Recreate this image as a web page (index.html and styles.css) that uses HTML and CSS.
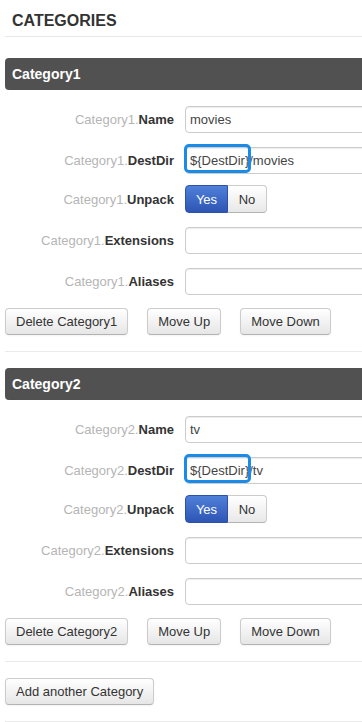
FILE: index.html
```html
<!DOCTYPE html>
<html>
<head>
<meta charset="utf-8">
<link rel="stylesheet" href="styles.css">
</head>
<body>
<div class="page">
  <h2 class="title">CATEGORIES</h2>

  <section class="cat">
    <div class="cat-bar">Category1</div>
    <div class="form">
      <div class="row">
        <label class="lbl"><span class="pre">Category1.</span><b>Name</b></label>
        <div class="input">movies</div>
      </div>
      <div class="row">
        <label class="lbl"><span class="pre">Category1.</span><b>DestDir</b></label>
        <div class="input">${DestDir}/movies<span class="hl"></span></div>
      </div>
      <div class="row row-toggle">
        <label class="lbl"><span class="pre">Category1.</span><b>Unpack</b></label>
        <div class="toggle"><span class="tg tg-on">Yes</span><span class="tg">No</span></div>
      </div>
      <div class="row">
        <label class="lbl"><span class="pre">Category1.</span><b>Extensions</b></label>
        <div class="input"></div>
      </div>
      <div class="row">
        <label class="lbl"><span class="pre">Category1.</span><b>Aliases</b></label>
        <div class="input"></div>
      </div>
      <div class="actions">
        <button class="btn">Delete Category1</button>
        <button class="btn">Move Up</button>
        <button class="btn">Move Down</button>
      </div>
    </div>
  </section>
  <hr class="sep">

  <section class="cat">
    <div class="cat-bar">Category2</div>
    <div class="form">
      <div class="row">
        <label class="lbl"><span class="pre">Category2.</span><b>Name</b></label>
        <div class="input">tv</div>
      </div>
      <div class="row">
        <label class="lbl"><span class="pre">Category2.</span><b>DestDir</b></label>
        <div class="input">${DestDir}/tv<span class="hl"></span></div>
      </div>
      <div class="row row-toggle">
        <label class="lbl"><span class="pre">Category2.</span><b>Unpack</b></label>
        <div class="toggle"><span class="tg tg-on">Yes</span><span class="tg">No</span></div>
      </div>
      <div class="row">
        <label class="lbl"><span class="pre">Category2.</span><b>Extensions</b></label>
        <div class="input"></div>
      </div>
      <div class="row">
        <label class="lbl"><span class="pre">Category2.</span><b>Aliases</b></label>
        <div class="input"></div>
      </div>
      <div class="actions">
        <button class="btn">Delete Category2</button>
        <button class="btn">Move Up</button>
        <button class="btn">Move Down</button>
      </div>
    </div>
  </section>
  <hr class="sep">

  <div class="add">
    <button class="btn">Add another Category</button>
  </div>
  <hr class="sep">
</div>
</body>
</html>
```

FILE: styles.css
```css
html, body {
  margin: 0;
  padding: 0;
  overflow: hidden;
  background: #fff;
}
body {
  font-family: "Liberation Sans", Arial, sans-serif;
  font-size: 13px;
  color: #333;
}
.page {
  width: 430px;
  padding: 11px 0 0 5px;
}
.title {
  margin: 0 0 21px;
  padding: 0 0 5px 7px;
  font-size: 16px;
  line-height: 20px;
  font-weight: bold;
  color: #333;
  border-bottom: 1px solid #e8e8e8;
}
.cat {
  margin-top: 16px;
}
.cat-bar {
  height: 32px;
  line-height: 32px;
  background: #515151;
  color: #fff;
  font-size: 14px;
  font-weight: bold;
  padding-left: 7px;
  border-radius: 4px 0 0 4px;
}
.form {
  margin-top: 16px;
  display: flex;
  flex-direction: column;
  gap: 14px;
}
.row {
  display: flex;
  align-items: center;
}
.row-toggle {
  margin-top: -3px;
}
.lbl {
  width: 169px;
  margin-right: 11px;
  text-align: right;
  font-size: 13px;
  line-height: 17px;
}
.pre {
  color: #b5b5b5;
}
.lbl b {
  color: #333;
}
.input {
  position: relative;
  flex: 1;
  height: 27px;
  box-sizing: border-box;
  border: 1px solid #ccc;
  border-radius: 4px 0 0 4px;
  box-shadow: inset 0 1px 1px rgba(0,0,0,0.075);
  padding: 0 4px;
  line-height: 25px;
  font-size: 13px;
  color: #444;
  background: #fff;
}
.hl {
  position: absolute;
  left: -2px;
  top: -4px;
  width: 67px;
  height: 29px;
  box-sizing: border-box;
  border: 3px solid #1a8be6;
  border-radius: 5px;
}
.toggle {
  display: flex;
  height: 28px;
}
.tg {
  display: flex;
  align-items: center;
  justify-content: center;
  box-sizing: border-box;
  height: 28px;
  font-size: 13px;
  color: #333;
  background: linear-gradient(#ffffff, #e8e8e8);
  border: 1px solid #ccc;
  border-bottom-color: #b3b3b3;
  border-left: none;
  border-radius: 0 4px 4px 0;
  width: 39px;
}
.tg-on {
  width: 43px;
  color: #fff;
  background: linear-gradient(#4f80da, #2e55b3);
  border: 1px solid #2d50a8;
  border-radius: 4px 0 0 4px;
}
.actions {
  display: flex;
  gap: 19px;
  margin-top: -1px;
}
.btn {
  font-family: "Liberation Sans", Arial, sans-serif;
  font-size: 13px;
  line-height: 17px;
  color: #333;
  padding: 4px 10px;
  height: 27px;
  box-sizing: border-box;
  background: linear-gradient(#ffffff, #e6e6e6);
  border: 1px solid #ccc;
  border-bottom-color: #b3b3b3;
  border-radius: 4px;
  box-shadow: inset 0 1px 0 rgba(255,255,255,0.2), 0 1px 2px rgba(0,0,0,0.05);
  margin: 0;
}
.sep {
  margin: 16px 0 0;
  height: 0;
  border: none;
  border-top: 1px solid #eaeaea;
}
.add {
  margin-top: 16px;
  margin-bottom: 0;
}
```
